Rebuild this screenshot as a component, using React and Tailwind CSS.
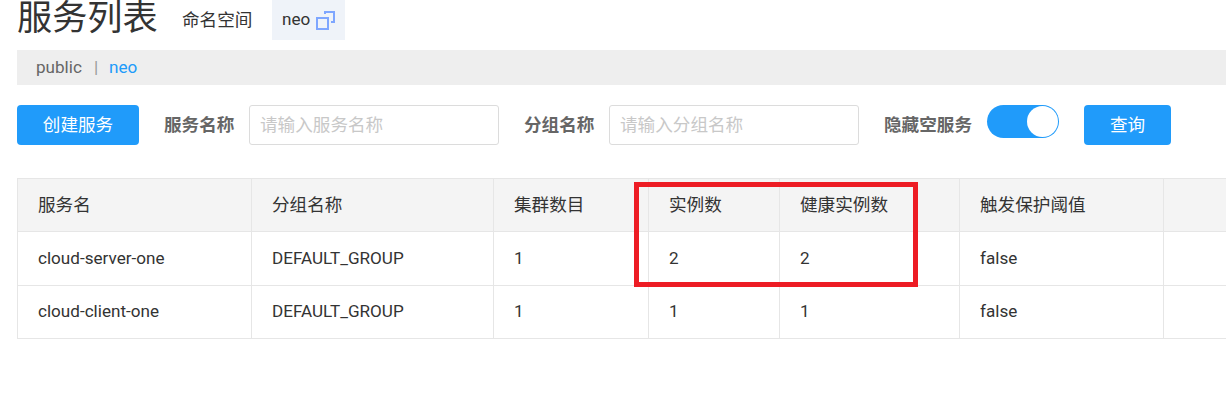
const font = { fontFamily: 'Roboto, "Noto Sans CJK SC", sans-serif' };

const cols = ["w-[235px]", "w-[242px]", "w-[155px]", "w-[131px]", "w-[180px]", "w-[204px]", "w-[62px]"];
const head = ["服务名", "分组名称", "集群数目", "实例数", "健康实例数", "触发保护阈值", ""];
const rows = [
  { h: "h-[54px]", cells: ["cloud-server-one", "DEFAULT_GROUP", "1", "2", "2", "false", ""] },
  { h: "h-[53px]", cells: ["cloud-client-one", "DEFAULT_GROUP", "1", "1", "1", "false", ""] },
];

function Row({ cells, header, h }) {
  return (
    <div className={`flex ${h} border-b border-[#e6e6e6] ${header ? "bg-[#f4f4f4] text-[17.6px]" : "bg-white text-[17.1px]"}`}>
      {cells.map((c, i) => (
        <div
          key={i}
          className={`${cols[i]} shrink-0 flex items-center px-5 text-[#333] border-r border-[#e6e6e6] last:border-r-0 ${i === 0 ? "border-l" : ""}`}
        >
          {c}
        </div>
      ))}
    </div>
  );
}

export default function App() {
  return (
    <div className="relative w-[1226px] h-[416px] overflow-hidden bg-white" style={font}>
      <div className="flex items-center h-10 pl-[17px]">
        <div className="text-[35.2px] leading-[36px] text-[#333] w-[165px] -mt-[4px]">服务列表</div>
        <div className="text-[17.6px] text-[#333] w-[90px]">命名空间</div>
        <div className="flex items-center gap-[6px] h-10 w-[73px] pl-[10px] bg-[#eff3f9] text-[17.1px] text-[#333]">
          neo
          <svg width="19" height="19" viewBox="0 0 19 19" fill="none" stroke="#7ea6ff" strokeWidth="2">
            <rect x="1" y="7" width="11" height="11" />
            <path d="M9 3V1h9v10h-3" />
          </svg>
        </div>
      </div>

      <div className="flex items-center h-[35px] mt-[10px] ml-[17px] pl-[19px] bg-[#eeeeee] text-[17.1px]">
        <span className="text-[#666]">public</span>
        <span className="text-[#999] ml-3 mr-[11px]">|</span>
        <span className="text-[#209bfa]">neo</span>
      </div>

      <div className="flex items-center h-10 mt-5 ml-[17px]">
        <button className="w-[122px] h-10 rounded bg-[#209bfa] text-white text-[17.6px]">创建服务</button>
        <label className="ml-[25px] w-[85px] text-[17.6px] font-bold text-[#666]">服务名称</label>
        <input
          readOnly
          placeholder="请输入服务名称"
          className="w-[250px] h-10 px-[10px] bg-white border border-[#dcdcdc] rounded-[3px] text-[17.6px] outline-none placeholder:text-[#c8c8c8]"
        />
        <label className="ml-[25px] w-[85px] text-[17.6px] font-bold text-[#666]">分组名称</label>
        <input
          readOnly
          placeholder="请输入分组名称"
          className="w-[250px] h-10 px-[10px] bg-white border border-[#dcdcdc] rounded-[3px] text-[17.6px] outline-none placeholder:text-[#c8c8c8]"
        />
        <label className="ml-[25px] w-[103px] text-[17.6px] font-bold text-[#666] whitespace-nowrap">隐藏空服务</label>
        <div className="flex items-center justify-end w-[72px] h-[33px] -mt-[7px] pr-[1px] rounded-full bg-[#209bfa]">
          <div className="w-[31px] h-[31px] rounded-full bg-white" />
        </div>
        <button className="ml-[25px] w-[87px] h-10 rounded bg-[#209bfa] text-white text-[17.6px]">查询</button>
      </div>

      <div className="mt-[33px] ml-[17px] border-t border-[#e6e6e6]">
        <Row cells={head} header h="h-[53px]" />
        {rows.map((r, i) => (
          <Row key={i} cells={r.cells} h={r.h} />
        ))}
      </div>

      <div className="absolute left-[634px] top-[182px] w-[284px] h-[105px] border-[5px] border-[#ed1c24]" />
    </div>
  );
}
